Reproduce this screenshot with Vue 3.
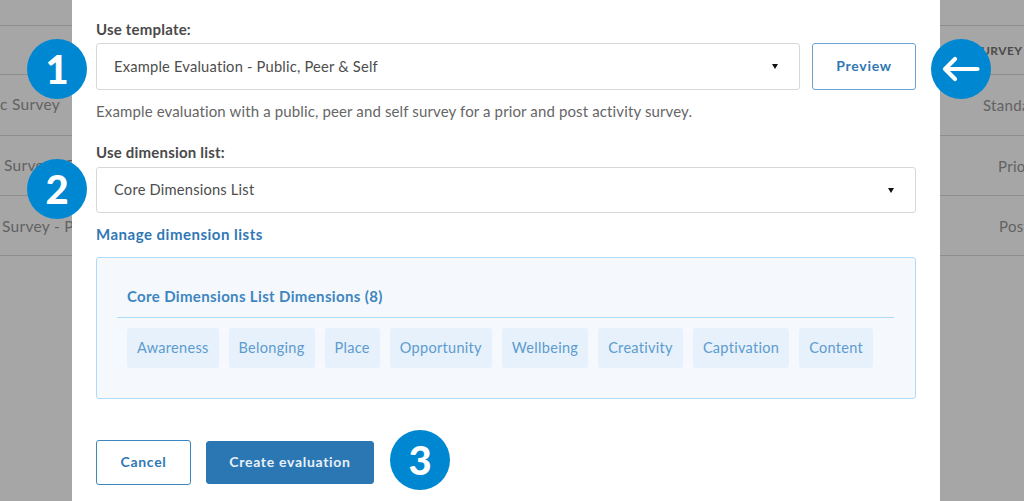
<script setup>
const dimensions = ['Awareness', 'Belonging', 'Place', 'Opportunity', 'Wellbeing', 'Creativity', 'Captivation', 'Content']
</script>

<template>
  <div class="page">
    <div class="gutter gutter-left">
      <div class="row row-head"></div>
      <div class="row row-a"><span class="cell cell-l1">c Survey</span></div>
      <div class="row row-b"><span class="cell cell-l2">Survey - P</span></div>
      <div class="row row-c"><span class="cell cell-l3">Survey - P</span></div>
    </div>

    <main class="modal">
      <label class="label first">Use template:</label>
      <div class="template-line">
        <div class="select grow">
          <span>Example Evaluation - Public, Peer &amp; Self</span>
          <i class="caret"></i>
        </div>
        <button class="btn preview">Preview</button>
      </div>
      <p class="help">Example evaluation with a public, peer and self survey for a prior and post activity survey.</p>

      <label class="label second">Use dimension list:</label>
      <div class="select list-select">
        <span>Core Dimensions List</span>
        <i class="caret"></i>
      </div>
      <a class="manage">Manage dimension lists</a>

      <section class="panel">
        <h3 class="panel-title">Core Dimensions List Dimensions (8)</h3>
        <div class="chips">
          <span v-for="d in dimensions" :key="d" class="chip">{{ d }}</span>
        </div>
      </section>

      <div class="actions">
        <button class="btn cancel">Cancel</button>
        <button class="btn create">Create evaluation</button>
      </div>
    </main>

    <div class="gutter gutter-right">
      <div class="row row-head"><span class="cell head-r">URVEY</span></div>
      <div class="row row-a"><span class="cell cell-r1">Standa</span></div>
      <div class="row row-b"><span class="cell cell-r2">Prio</span></div>
      <div class="row row-c"><span class="cell cell-r3">Post</span></div>
    </div>

    <div class="badge b1">1</div>
    <div class="badge b2">2</div>
    <div class="badge b3">3</div>
    <div class="badge b4">
      <svg width="38" height="26" viewBox="0 0 38 26" fill="none" stroke="#fff" stroke-width="4.2" stroke-linecap="round" stroke-linejoin="round">
        <path d="M35.500 13H3M13 3 3 13 13 23" />
      </svg>
    </div>
  </div>
</template>

<style>
html, body { margin: 0; padding: 0; background: #a6a6a6; }
</style>

<style scoped>
.page {
  position: relative;
  display: flex;
  width: 1024px;
  height: 501px;
  overflow: hidden;
  background: #a6a6a6;
  font-family: Lato, "Open Sans", sans-serif;
  color: #444;
}
.gutter { flex: none; display: flex; flex-direction: column; overflow: hidden; padding-top: 25px; color: #626262; font-size: 15.500px; letter-spacing: 0.3px; }
.gutter-left { width: 72px; }
.gutter-right { width: 84px; font-size: 15px; }
.row { flex: none; border-top: 1px solid #8e8e8e; white-space: nowrap; display: flex; align-items: center; box-sizing: border-box; }
.row-head { height: 49px; }
.row-a { height: 61px; }
.row-b { height: 60px; }
.row-c { height: 61px; border-bottom: 1px solid #8e8e8e; }
.cell-l1 { margin-top: -2px; }
.cell-l2 { margin-left: 4px; margin-top: -2px; }
.cell-l3 { margin-left: 2px; }
.head-r { margin-left: 41px; font-size: 12px; font-weight: 700; color: #4b4b4b; letter-spacing: 0.4px; margin-top: 1px; }
.cell-r1 { margin-left: 43px; }
.cell-r2 { margin-left: 58px; }
.cell-r3 { margin-left: 59px; }

.modal {
  flex: none;
  width: 868px;
  box-sizing: border-box;
  height: 501px;
  padding: 0 24px;
  background: #fff;
  display: flex;
  flex-direction: column;
  align-items: stretch;
}
.label { display: block; font-size: 15px; font-weight: 700; color: #4a4a4a; line-height: 18px; letter-spacing: 0.2px; }
.first { margin-top: 20px; }
.template-line { display: flex; gap: 12px; margin-top: 5px; }
.select {
  box-sizing: border-box;
  height: 47px;
  display: flex;
  align-items: center;
  justify-content: space-between;
  padding: 0 21px 2px 17px;
  border: 1px solid #d8d8d8;
  border-radius: 3px;
  background: #fff;
  font-size: 14.700px;
  color: #4d4d4d;
  letter-spacing: 0.2px;
}
.grow { flex: 1; }
.caret { width: 0; height: 0; margin-top: 2px; border-left: 3.500px solid transparent; border-right: 3.500px solid transparent; border-top: 5px solid #111; }
.btn {
  box-sizing: border-box;
  font-family: inherit;
  font-weight: 700;
  font-size: 14px;
  letter-spacing: 0.7px;
  border-radius: 3px;
  padding: 0 0 2px;
  cursor: pointer;
  background: #fff;
  color: #2f78b5;
}
.preview { width: 104px; height: 47px; border: 1px solid #6ba4d2; }
.help { margin: 12px 0 0; font-size: 15px; line-height: 18px; color: #666; letter-spacing: 0.13px; }
.second { margin-top: 23px; }
.list-select { height: 46px; margin-top: 6px; }
.manage { margin-top: 12px; font-size: 15px; line-height: 18px; font-weight: 700; color: #2f78b5; letter-spacing: 0.5px; }
.panel {
  box-sizing: border-box;
  height: 142px;
  margin-top: 14px;
  padding: 0 21px 0 20px;
  border: 1px solid #aedcf8;
  border-radius: 3px;
  background: #f5f9fe;
}
.panel-title {
  margin: 0;
  padding: 29px 10px 12px;
  font-size: 15px;
  line-height: 18px;
  font-weight: 700;
  color: #3f86bf;
  letter-spacing: 0.35px;
  border-bottom: 1px solid #aedcf8;
}
.chips { display: flex; gap: 10px; padding: 10px 10px 0; }
.chip {
  box-sizing: border-box;
  height: 40px;
  display: flex;
  align-items: center;
  padding: 0 10px 2px;
  background: #e6f1fb;
  border-radius: 3px;
  font-size: 14.500px;
  color: #5d9bcf;
  letter-spacing: 0.3px;
}
.actions { display: flex; align-items: center; gap: 15px; margin-top: 41px; }
.cancel { width: 95px; height: 45px; border: 1px solid #3c86c0; }
.create { width: 168px; height: 43px; border: 1px solid #2b77b4; background: #2b77b4; color: #e8f1f8; }

.badge {
  position: absolute;
  width: 60px;
  height: 60px;
  border-radius: 50%;
  background: #0087d1;
  color: #fff;
  display: flex;
  align-items: center;
  justify-content: center;
  font-size: 40px;
  font-weight: 900;
  line-height: 1;
}
.b1 { left: 27px; top: 39px; }
.b2 { left: 27px; top: 159px; }
.b3 { left: 390px; top: 430px; }
.b4 { left: 931px; top: 39px; }
</style>
